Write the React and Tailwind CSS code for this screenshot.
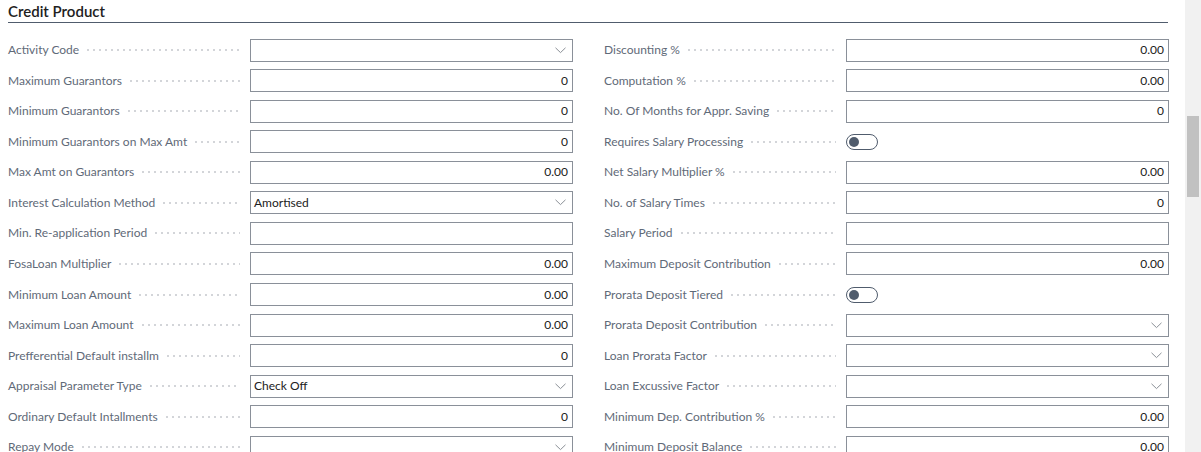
const left = [
  { label: "Activity Code", type: "select", value: "" },
  { label: "Maximum Guarantors", type: "num", value: "0" },
  { label: "Minimum Guarantors", type: "num", value: "0" },
  { label: "Minimum Guarantors on Max Amt", type: "num", value: "0" },
  { label: "Max Amt on Guarantors", type: "num", value: "0.00" },
  { label: "Interest Calculation Method", type: "select", value: "Amortised" },
  { label: "Min. Re-application Period", type: "text", value: "" },
  { label: "FosaLoan Multiplier", type: "num", value: "0.00" },
  { label: "Minimum Loan Amount", type: "num", value: "0.00" },
  { label: "Maximum Loan Amount", type: "num", value: "0.00" },
  { label: "Prefferential Default installm", type: "num", value: "0" },
  { label: "Appraisal Parameter Type", type: "select", value: "Check Off" },
  { label: "Ordinary Default Intallments", type: "num", value: "0" },
  { label: "Repay Mode", type: "select", value: "" },
];

const right = [
  { label: "Discounting %", type: "num", value: "0.00" },
  { label: "Computation %", type: "num", value: "0.00" },
  { label: "No. Of Months for Appr. Saving", type: "num", value: "0" },
  { label: "Requires Salary Processing", type: "toggle" },
  { label: "Net Salary Multiplier %", type: "num", value: "0.00" },
  { label: "No. of Salary Times", type: "num", value: "0" },
  { label: "Salary Period", type: "text", value: "" },
  { label: "Maximum Deposit Contribution", type: "num", value: "0.00" },
  { label: "Prorata Deposit Tiered", type: "toggle" },
  { label: "Prorata Deposit Contribution", type: "select", value: "" },
  { label: "Loan Prorata Factor", type: "select", value: "" },
  { label: "Loan Excussive Factor", type: "select", value: "" },
  { label: "Minimum Dep. Contribution %", type: "num", value: "0.00" },
  { label: "Minimum Deposit Balance", type: "num", value: "0.00" },
];

function Chevron() {
  return (
    <svg width="11" height="7" viewBox="0 0 11 7" className="shrink-0">
      <path d="M0.5 0.8 L5.5 5.6 L10.5 0.8" fill="none" stroke="#8a8f96" strokeWidth="1" />
    </svg>
  );
}

function Control({ field }) {
  if (field.type === "toggle") {
    return (
      <div className="w-[323px] flex items-center">
        <div className="w-[32px] h-[16px] rounded-full border border-[#505c6d] flex items-center px-[2px]">
          <div className="w-[10px] h-[10px] rounded-full bg-[#505c6d]" />
        </div>
      </div>
    );
  }
  const base = "w-[323px] h-[23px] border border-[#8a9099] bg-white flex items-center text-[12px] text-[#212121]";
  if (field.type === "select") {
    return (
      <div className={`${base} pl-[3px] pr-[6px] justify-between`}>
        <span>{field.value}</span>
        <Chevron />
      </div>
    );
  }
  if (field.type === "num") {
    return <div className={`${base} justify-end pr-[4px]`}>{field.value}</div>;
  }
  return <div className={`${base} pl-[3px]`}>{field.value}</div>;
}

function Row({ field }) {
  return (
    <div className="h-[30.54px] flex items-center">
      <div className="flex-1 flex items-center min-w-0 pr-[10px]">
        <span className="text-[12px] text-[#5f6a78] whitespace-nowrap">{field.label}</span>
        <div className="flex-1 ml-[8px] h-[2px] bg-[linear-gradient(to_right,#d3d5d9_2px,transparent_2px)] bg-[length:6px_2px] bg-repeat-x" />
      </div>
      <Control field={field} />
    </div>
  );
}

export default function App() {
  return (
    <div className="w-[1201px] h-[452px] overflow-hidden bg-white flex font-['Segoe_UI','Lato',sans-serif]">
      <div className="flex-1 min-w-0">
        <div className="pl-[8px] pr-[17px]">
          <div className="h-[23px] border-b border-[#505c6d] flex items-end">
            <h2 className="text-[15px] font-semibold text-[#212121] leading-none pb-[3px]">Credit Product</h2>
          </div>
        </div>
        <div className="pl-[8px] pt-[12px] grid grid-cols-[565px_565px] gap-x-[31px]">
          <div>
            {left.map((f) => (
              <Row key={f.label} field={f} />
            ))}
          </div>
          <div>
            {right.map((f) => (
              <Row key={f.label} field={f} />
            ))}
          </div>
        </div>
      </div>
      <div className="w-[16px] bg-[#f1f1f1] pt-[116px] flex justify-center">
        <div className="w-[12px] h-[81px] bg-[#c1c1c1]" />
      </div>
    </div>
  );
}
